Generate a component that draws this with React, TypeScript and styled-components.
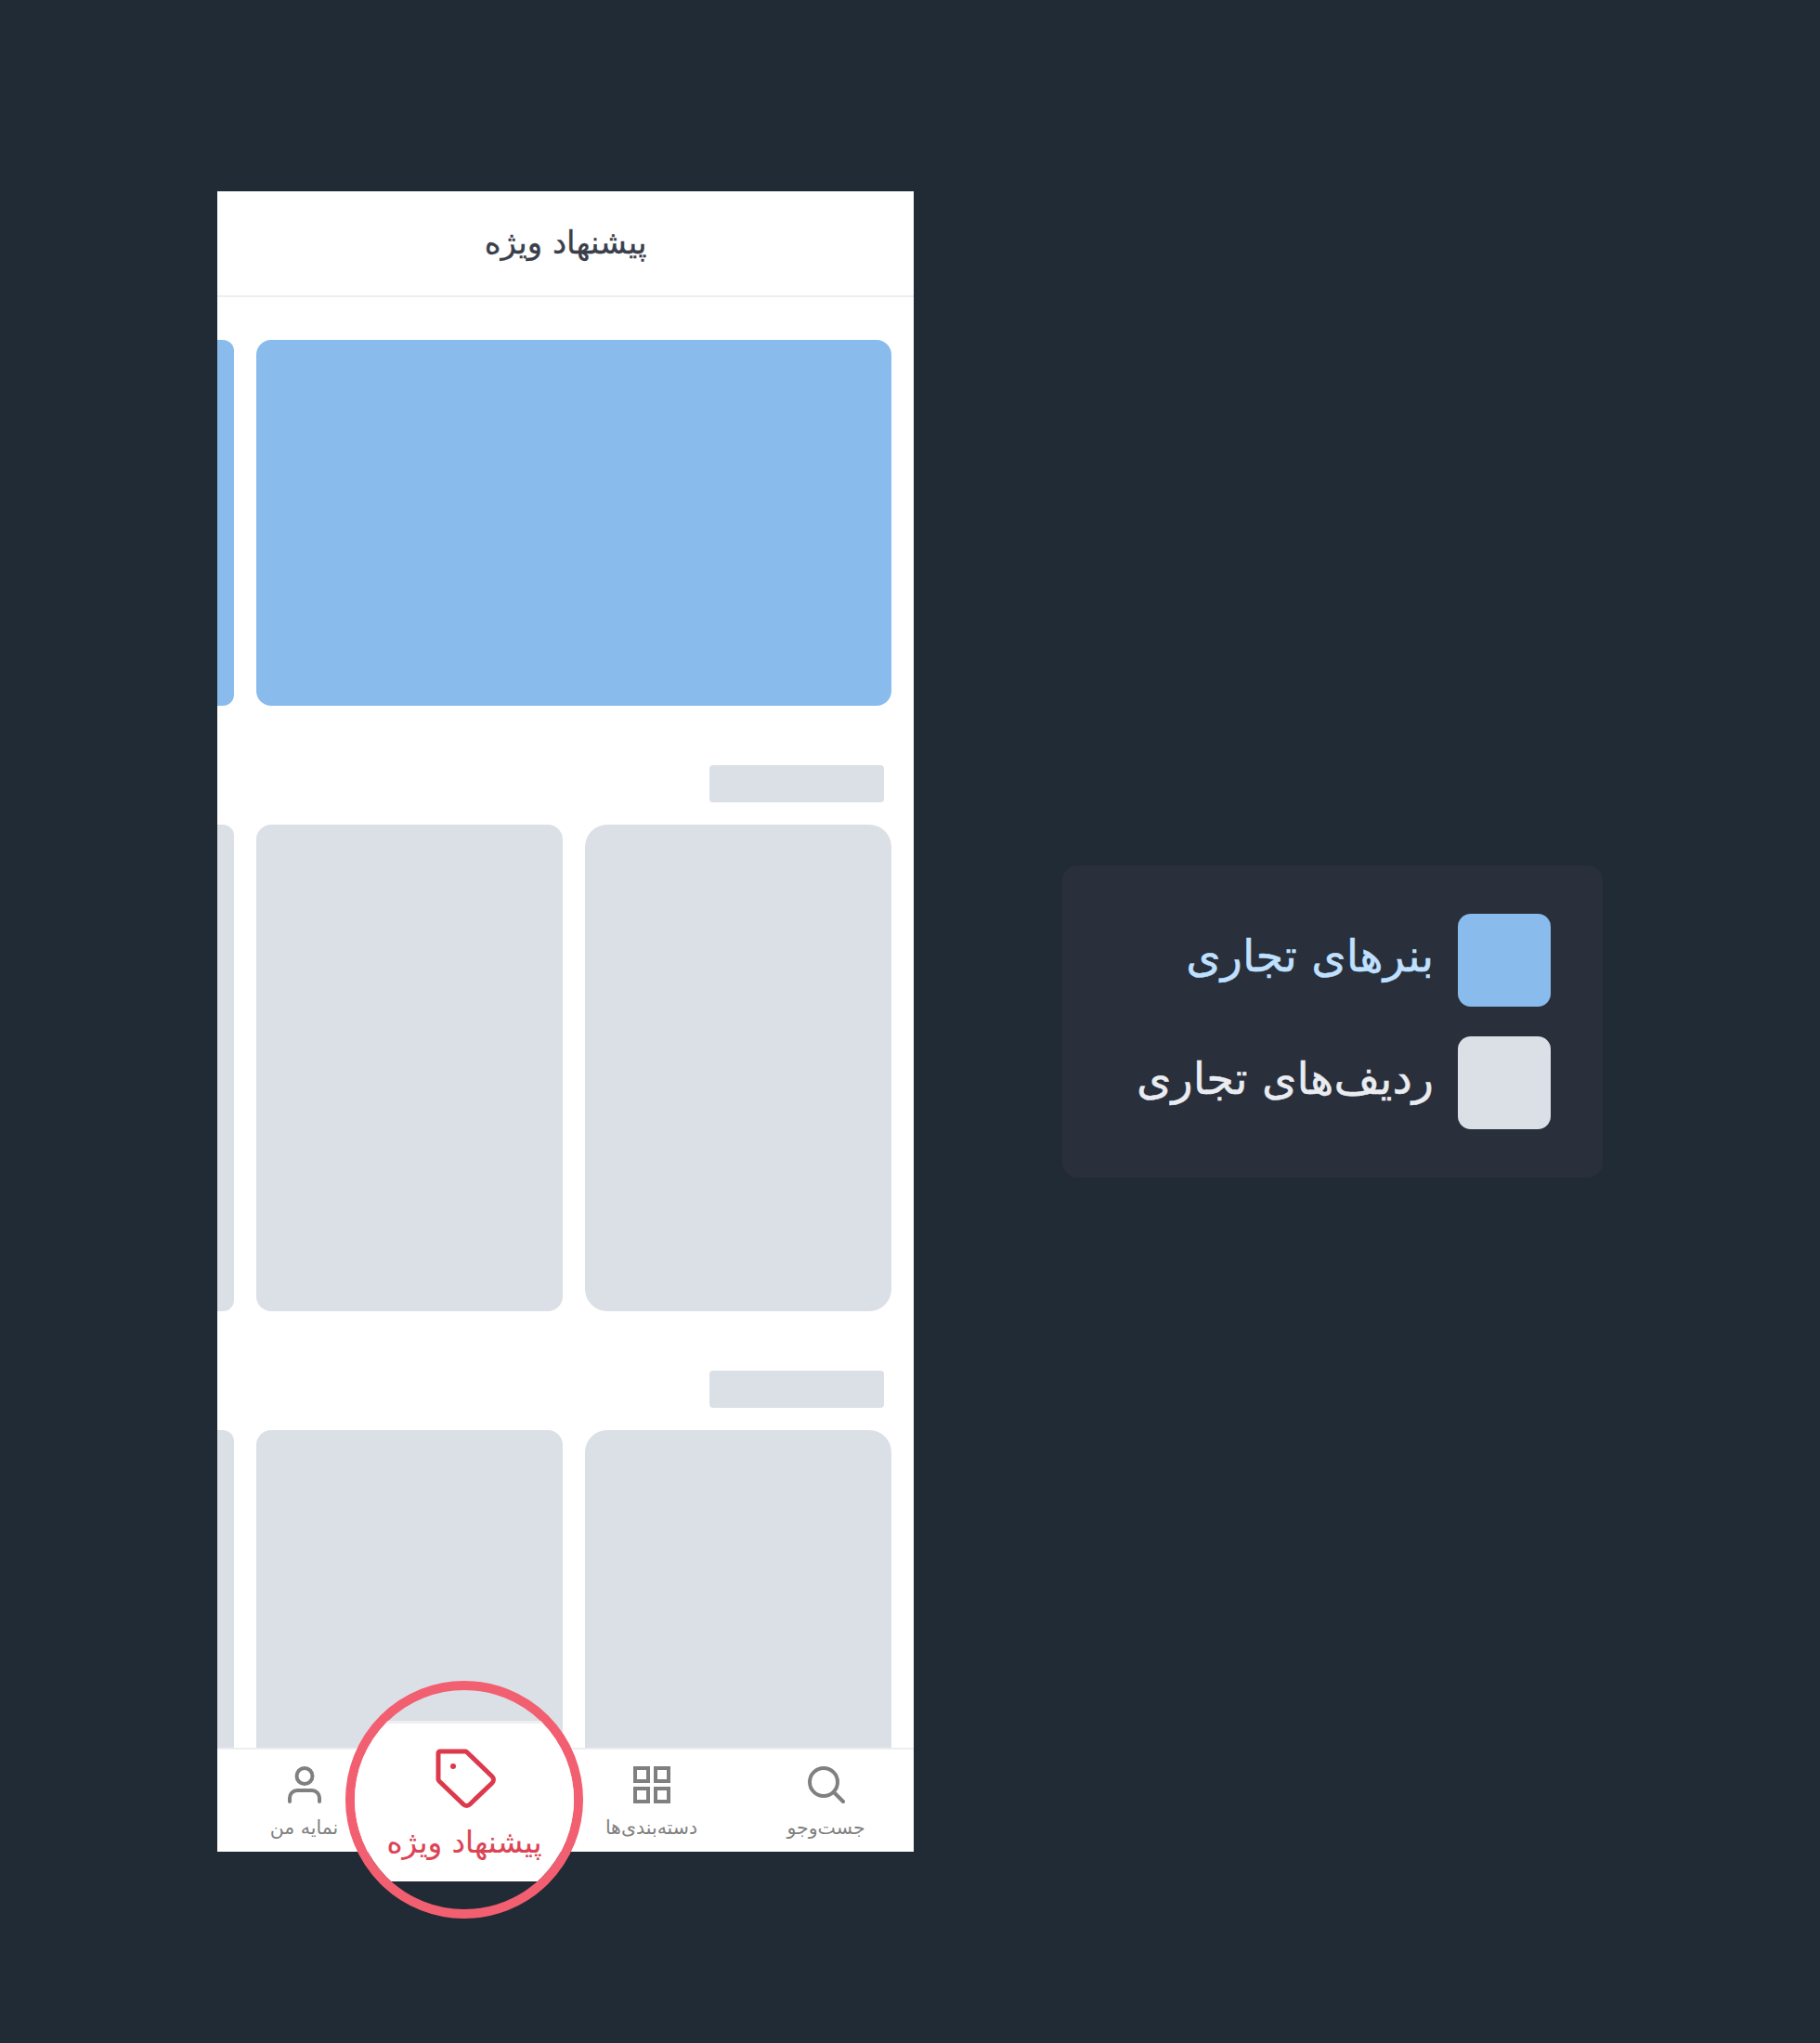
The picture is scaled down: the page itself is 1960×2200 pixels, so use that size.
import styled, { createGlobalStyle } from "styled-components";

const GlobalStyle = createGlobalStyle`
  html, body {
    margin: 0;
    padding: 0;
    background: #212b36;
  }
`;

const FONT = `"DejaVu Sans", "Noto Sans", sans-serif`;

const Page = styled.div`
  width: 1960px;
  height: 2200px;
  background: #212b36;
  display: flex;
  align-items: flex-start;
  font-family: ${FONT};
`;

const Phone = styled.div`
  position: relative;
  width: 750px;
  height: 1788px;
  margin: 206px 0 0 234px;
  background: #fff;
  display: flex;
  flex-direction: column;
`;

const Header = styled.header`
  height: 114px;
  flex: none;
  box-sizing: border-box;
  padding-bottom: 2px;
  border-bottom: 2px solid #eeeeee;
  display: flex;
  align-items: center;
  justify-content: center;
  color: #3a3f4b;
  font-size: 34px;
  -webkit-text-stroke: 0.4px #3a3f4b;
  direction: rtl;
`;

const Feed = styled.div`
  flex: 1;
  min-height: 0;
  overflow: hidden;
  padding-top: 46px;
  display: flex;
  flex-direction: column;
`;

const Scroller = styled.div`
  display: flex;
  flex: none;
  justify-content: flex-end;
  gap: 24px;
  padding-right: 24px;
  overflow: hidden;
`;

const Banner = styled.div<{ $w: number }>`
  flex: none;
  width: ${(p) => p.$w}px;
  height: 394px;
  background: #89bcec;
  border-radius: ${(p) => (p.$w < 100 ? "0 12px 12px 0" : "16px")};
`;

const SectionTitle = styled.div`
  flex: none;
  width: 188px;
  height: 40px;
  margin: 64px 32px 24px auto;
  background: #dbdfe6;
  border-radius: 4px;
`;

const Card = styled.div<{ $w: number; $r: number }>`
  flex: none;
  width: ${(p) => p.$w}px;
  height: 524px;
  background: #dbdfe6;
  border-radius: ${(p) => (p.$w < 100 ? `0 ${p.$r}px ${p.$r}px 0` : `${p.$r}px`)};
`;

const TabBar = styled.nav`
  flex: none;
  height: 112px;
  box-sizing: border-box;
  border-top: 2px solid #eeeeee;
  background: #fff;
  display: flex;
`;

const Tab = styled.div<{ $w: number }>`
  flex: none;
  width: ${(p) => p.$w}px;
  display: flex;
  flex-direction: column;
  align-items: center;
  padding-top: 18px;
  box-sizing: border-box;
  color: #808080;
  font-size: 20.5px;
  line-height: 30px;
  direction: rtl;
  svg {
    display: block;
    margin-bottom: 11px;
  }
`;

const Magnifier = styled.div`
  position: absolute;
  left: 138px;
  top: 1604px;
  width: 256px;
  height: 256px;
  box-sizing: border-box;
  border: 10px solid #f25f70;
  border-radius: 50%;
  overflow: hidden;
`;

const MagnifiedTab = styled.div`
  margin-top: 33px;
  height: 173px;
  box-sizing: border-box;
  border-top: 3px solid #eeeeee;
  background: #fff;
  display: flex;
  flex-direction: column;
  align-items: center;
  color: #dc4456;
  font-size: 32.5px;
  line-height: 46px;
  -webkit-text-stroke: 0.2px #dc4456;
  direction: rtl;
  svg {
    display: block;
    margin: 27px 0 12px;
    margin-inline-end: 4px;
  }
`;

const Legend = styled.aside`
  width: 582px;
  height: 336px;
  margin: 932px 0 0 160px;
  box-sizing: border-box;
  padding: 52px 56px;
  background: #292f3b;
  border-radius: 16px;
  display: flex;
  flex-direction: column;
  gap: 32px;
`;

const LegendRow = styled.div`
  display: flex;
  align-items: center;
  justify-content: flex-end;
  gap: 26px;
`;

const LegendLabel = styled.span<{ $color: string }>`
  color: ${(p) => p.$color};
  font-size: 48px;
  padding-bottom: 10px;
  -webkit-text-stroke: 0.5px ${(p) => p.$color};
  direction: rtl;
`;

const Swatch = styled.div<{ $color: string }>`
  width: 100px;
  height: 100px;
  border-radius: 14px;
  background: ${(p) => p.$color};
`;

function CardRow() {
  return (
    <Scroller>
      <Card $w={18} $r={12} />
      <Card $w={330} $r={16} />
      <Card $w={330} $r={24} />
    </Scroller>
  );
}

export default function App() {
  return (
    <>
      <GlobalStyle />
      <Page>
        <Phone>
          <Header>پیشنهاد ویژه</Header>
          <Feed>
            <Scroller>
              <Banner $w={18} />
              <Banner $w={684} />
            </Scroller>
            <SectionTitle />
            <CardRow />
            <SectionTitle />
            <CardRow />
          </Feed>
          <TabBar>
            <Tab $w={187}>
              <svg width="36" height="40" viewBox="0 0 36 40" fill="none" stroke="#808080" strokeWidth="4">
                <circle cx="18" cy="10.5" r="8.5" />
                <path d="M2 38v-4a8 8 0 0 1 8-8h16a8 8 0 0 1 8 8v4" strokeLinecap="round" />
              </svg>
              نمایه من
            </Tab>
            <Tab $w={187} />
            <Tab $w={187}>
              <svg width="40" height="40" viewBox="0 0 40 40" fill="none" stroke="#808080" strokeWidth="4">
                <rect x="2" y="2" width="14" height="14" />
                <rect x="24" y="2" width="14" height="14" />
                <rect x="2" y="24" width="14" height="14" />
                <rect x="24" y="24" width="14" height="14" />
              </svg>
              دسته‌بندی‌ها
            </Tab>
            <Tab $w={189}>
              <svg width="40" height="40" viewBox="0 0 40 40" fill="none" stroke="#808080" strokeWidth="4" strokeLinecap="round">
                <circle cx="17" cy="17" r="15" />
                <path d="M28 28l10 10" />
              </svg>
              جست‌وجو
            </Tab>
          </TabBar>
          <Magnifier>
            <MagnifiedTab>
              <svg width="66" height="66" viewBox="0 0 66 66" fill="none" stroke="#dc3a4c" strokeWidth="5" strokeLinejoin="round">
                <path d="M5 3h27a3 3 0 0 1 2 1l27 26a5 5 0 0 1 0 7L37 60a5 5 0 0 1-7 0L4 35a3 3 0 0 1-1-2V5a2 2 0 0 1 2-2z" />
                <circle cx="19" cy="19" r="3" fill="#dc3a4c" stroke="none" />
              </svg>
              پیشنهاد ویژه
            </MagnifiedTab>
          </Magnifier>
        </Phone>
        <Legend>
          <LegendRow>
            <LegendLabel $color="#bfe0ff">بنرهای تجاری</LegendLabel>
            <Swatch $color="#89bcec" />
          </LegendRow>
          <LegendRow>
            <LegendLabel $color="#e9ecf0">ردیف‌های تجاری</LegendLabel>
            <Swatch $color="#dbdfe6" />
          </LegendRow>
        </Legend>
      </Page>
    </>
  );
}
